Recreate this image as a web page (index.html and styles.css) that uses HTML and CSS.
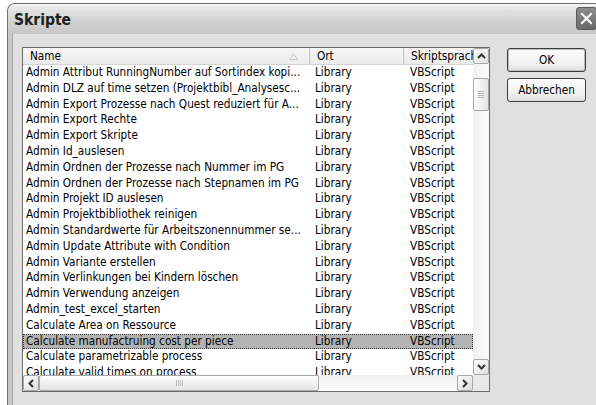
FILE: index.html
```html
<!DOCTYPE html>
<html lang="de">
<head>
<meta charset="utf-8">
<title>Skripte</title>
<link rel="stylesheet" href="styles.css">
</head>
<body>
<div class="window">
  <div class="titlebar">
    <span class="title">Skripte</span>
    <span class="close">
      <svg width="19" height="21" viewBox="0 0 19 21"><path d="M5 6 L14 15 M14 6 L5 15" stroke="#fff" stroke-width="2" stroke-linecap="square"/></svg>
    </span>
  </div>
  <div class="client">
    <div class="listview">
      <div class="lv-main">
        <div class="lv-header">
          <div class="hcol c-name">Name
            <svg class="sort" width="9" height="7" viewBox="0 0 9 7"><path d="M0.5 6.5 L4.5 0.5 L8.5 6.5 Z" fill="none" stroke="#c6c6c6"/></svg>
          </div>
          <div class="hcol c-ort">Ort</div>
          <div class="hcol c-lang">Skriptsprache</div>
        </div>
        <div class="lv-rows">
          <div class="row"><span class="c-name">Admin Attribut RunningNumber auf Sortindex kopi...</span><span class="c-ort">Library</span><span class="c-lang">VBScript</span></div>
          <div class="row"><span class="c-name">Admin DLZ auf time setzen (Projektbibl_Analysesc...</span><span class="c-ort">Library</span><span class="c-lang">VBScript</span></div>
          <div class="row"><span class="c-name">Admin Export Prozesse nach Quest reduziert für A...</span><span class="c-ort">Library</span><span class="c-lang">VBScript</span></div>
          <div class="row"><span class="c-name">Admin Export Rechte</span><span class="c-ort">Library</span><span class="c-lang">VBScript</span></div>
          <div class="row"><span class="c-name">Admin Export Skripte</span><span class="c-ort">Library</span><span class="c-lang">VBScript</span></div>
          <div class="row"><span class="c-name">Admin Id_auslesen</span><span class="c-ort">Library</span><span class="c-lang">VBScript</span></div>
          <div class="row"><span class="c-name">Admin Ordnen der Prozesse nach Nummer im PG</span><span class="c-ort">Library</span><span class="c-lang">VBScript</span></div>
          <div class="row"><span class="c-name">Admin Ordnen der Prozesse nach Stepnamen im PG</span><span class="c-ort">Library</span><span class="c-lang">VBScript</span></div>
          <div class="row"><span class="c-name">Admin Projekt ID auslesen</span><span class="c-ort">Library</span><span class="c-lang">VBScript</span></div>
          <div class="row"><span class="c-name">Admin Projektbibliothek reinigen</span><span class="c-ort">Library</span><span class="c-lang">VBScript</span></div>
          <div class="row"><span class="c-name">Admin Standardwerte für Arbeitszonennummer se...</span><span class="c-ort">Library</span><span class="c-lang">VBScript</span></div>
          <div class="row"><span class="c-name">Admin Update Attribute with Condition</span><span class="c-ort">Library</span><span class="c-lang">VBScript</span></div>
          <div class="row"><span class="c-name">Admin Variante erstellen</span><span class="c-ort">Library</span><span class="c-lang">VBScript</span></div>
          <div class="row"><span class="c-name">Admin Verlinkungen bei Kindern löschen</span><span class="c-ort">Library</span><span class="c-lang">VBScript</span></div>
          <div class="row"><span class="c-name">Admin Verwendung anzeigen</span><span class="c-ort">Library</span><span class="c-lang">VBScript</span></div>
          <div class="row"><span class="c-name">Admin_test_excel_starten</span><span class="c-ort">Library</span><span class="c-lang">VBScript</span></div>
          <div class="row"><span class="c-name">Calculate Area on Ressource</span><span class="c-ort">Library</span><span class="c-lang">VBScript</span></div>
          <div class="row selected"><span class="c-name">Calculate manufactruing cost per piece</span><span class="c-ort">Library</span><span class="c-lang">VBScript</span></div>
          <div class="row"><span class="c-name">Calculate parametrizable process</span><span class="c-ort">Library</span><span class="c-lang">VBScript</span></div>
          <div class="row"><span class="c-name">Calculate valid times on process</span><span class="c-ort">Library</span><span class="c-lang">VBScript</span></div>
        </div>
      </div>
      <div class="vscroll">
        <span class="sbtn">
          <svg width="9" height="6" viewBox="0 0 9 6"><path d="M1 5 L4.5 1.5 L8 5" fill="none" stroke="#333" stroke-width="2"/></svg>
        </span>
        <div class="vtrack">
          <span class="vthumb"><span class="grip-v"></span></span>
        </div>
        <span class="sbtn">
          <svg width="9" height="6" viewBox="0 0 9 6"><path d="M1 1 L4.5 4.5 L8 1" fill="none" stroke="#333" stroke-width="2"/></svg>
        </span>
      </div>
      <div class="hscroll">
        <span class="sbtn">
          <svg width="6" height="9" viewBox="0 0 6 9"><path d="M5 1 L1.5 4.5 L5 8" fill="none" stroke="#333" stroke-width="2"/></svg>
        </span>
        <div class="htrack">
          <span class="hthumb"><span class="grip-h"></span></span>
        </div>
        <span class="sbtn">
          <svg width="6" height="9" viewBox="0 0 6 9"><path d="M1 1 L4.5 4.5 L1 8" fill="none" stroke="#333" stroke-width="2"/></svg>
        </span>
      </div>
      <div class="corner"></div>
    </div>
    <div class="buttons">
      <button class="btn default">OK</button>
      <button class="btn">Abbrechen</button>
    </div>
  </div>
</div>
</body>
</html>
```
FILE: styles.css
```css
html, body {
  margin: 0;
  padding: 0;
  background: #fff;
  overflow: hidden;
  height: 405px;
}

.window {
  margin: 3px 0 0 7px;
  width: 600px;
  height: 420px;
  border: 1px solid #6f6f6f;
  border-right: none;
  border-radius: 8px 0 0 0;
  display: flex;
  flex-direction: column;
  background: #c6c6c6;
  overflow: hidden;
  font-family: "DejaVu Sans Condensed", "DejaVu Sans", sans-serif;
  font-stretch: condensed;
  font-size: 11.7px;
  color: #000;
}

/* caption bar */
.titlebar {
  height: 30px;
  flex: none;
  display: flex;
  align-items: center;
  padding-left: 6px;
  background: linear-gradient(#f6f6f6 0%, #e2e2e2 20%, #d2d2d2 60%, #c6c6c6 100%);
  position: relative;
}

.title {
  font-weight: bold;
  font-size: 15.5px;
  color: #1e1e1e;
  margin-top: 1px;
}

.close {
  position: absolute;
  left: 568px;
  top: 3px;
  width: 19px;
  height: 21px;
  border: 1px solid #5a5a5a;
  border-radius: 3px;
  background: linear-gradient(#8c8c8c, #6a6a6a);
  display: flex;
}

/* dialog client area */
.client {
  flex: 1;
  margin-left: 4px;
  border-left: 1px solid #a9a9a9;
  background: #e0e0e0;
  display: flex;
  align-items: flex-start;
  padding: 13px 0 0 9px;
  gap: 17px;
}

/* list view */
.listview {
  width: 466px;
  height: 343px;
  border: 1px solid #6b6b6b;
  background: #fff;
  display: grid;
  grid-template-columns: 450px 16px;
  grid-template-rows: 327px 16px;
}

.lv-main {
  overflow: hidden;
}

.lv-header {
  display: flex;
  height: 16px;
  background: linear-gradient(#f7f7f7, #ebebeb);
  border-bottom: 1px solid #d4d4d4;
  white-space: nowrap;
}

.hcol {
  position: relative;
  line-height: 16px;
  border-right: 1px solid #b9b9b9;
  box-shadow: inset -1px 0 0 #fff;
  overflow: hidden;
  flex: none;
}

.hcol.c-name { width: 279px; padding-left: 7px; }
.hcol.c-ort { width: 86px; padding-left: 7px; }
.hcol.c-lang { width: 120px; padding-left: 7px; }

.sort {
  position: absolute;
  left: 266px;
  top: 5px;
}

.row {
  display: flex;
  height: 15.8px;
  line-height: 15.8px;
  white-space: nowrap;
  box-sizing: border-box;
}

.row .c-name { width: 283px; padding-left: 3px; flex: none; }
.row .c-ort { width: 88px; padding-left: 6px; flex: none; }
.row .c-lang { padding-left: 7px; }

.row.selected {
  background: #b3b3b3;
  outline: 1px dotted #3a3a3a;
  outline-offset: -1px;
}

/* scrollbars */
.vscroll {
  grid-column: 2;
  grid-row: 1;
  display: flex;
  flex-direction: column;
  background: linear-gradient(90deg, #f1f1f1, #fbfbfb);
}

.hscroll {
  grid-column: 1;
  grid-row: 2;
  display: flex;
  background: linear-gradient(#f1f1f1, #fbfbfb);
}

.corner {
  grid-column: 2;
  grid-row: 2;
  background: #e9e9e9;
}

.sbtn {
  flex: none;
  width: 16px;
  height: 16px;
  box-sizing: border-box;
  border: 1px solid #a7a7a7;
  border-radius: 2px;
  background: linear-gradient(135deg, #fdfdfd, #dedede);
  display: flex;
  align-items: center;
  justify-content: center;
}

.vtrack {
  flex: 1;
  position: relative;
}

.vthumb {
  position: absolute;
  left: 0;
  top: 14px;
  width: 16px;
  height: 33px;
  box-sizing: border-box;
  border: 1px solid #a7a7a7;
  border-radius: 2px;
  background: linear-gradient(90deg, #fdfdfd, #e4e4e4);
  display: flex;
  align-items: center;
  justify-content: center;
}

.grip-v {
  width: 6px;
  height: 7px;
  background: repeating-linear-gradient(#b8b8b8 0 1px, transparent 1px 2px);
}

.htrack {
  flex: 1;
  position: relative;
}

.hthumb {
  position: absolute;
  top: 0;
  left: 0;
  width: 280px;
  height: 16px;
  box-sizing: border-box;
  border: 1px solid #a7a7a7;
  border-radius: 2px;
  background: linear-gradient(#fdfdfd, #e4e4e4);
  display: flex;
  align-items: center;
  justify-content: center;
}

.grip-h {
  width: 7px;
  height: 6px;
  background: repeating-linear-gradient(90deg, #b8b8b8 0 1px, transparent 1px 2px);
}

/* dialog buttons */
.buttons {
  display: flex;
  flex-direction: column;
  gap: 6px;
  padding-top: 1px;
}

.btn {
  width: 79px;
  height: 24px;
  padding: 0;
  border: 1px solid #3d3d3d;
  border-radius: 3px;
  background: linear-gradient(#fcfcfc, #f0f0f0 70%, #dcdcdc);
  font: inherit;
  font-stretch: condensed;
  color: #000;
}

.btn.default {
  box-shadow: inset 0 0 0 1px #bdbdbd;
}
```
